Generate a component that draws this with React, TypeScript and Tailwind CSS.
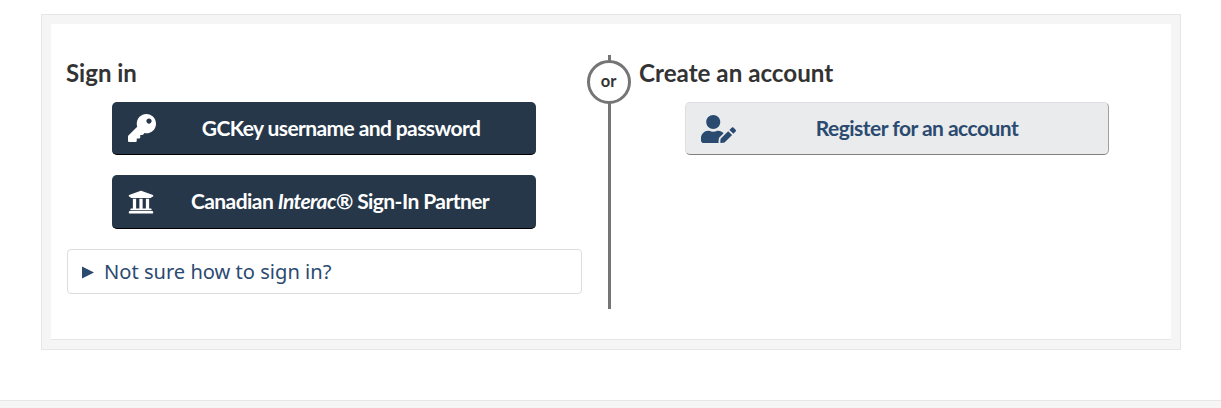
import { FaKey, FaUniversity, FaUserEdit } from 'react-icons/fa'

const lato = "font-['Lato','Liberation_Sans',sans-serif]"

export default function App() {
  return (
    <div className="h-[408px] overflow-hidden bg-white font-['Noto_Sans',sans-serif]">
      <div className="ml-[41px] mr-[40px] mt-[14px] border border-[#e6e6e6] bg-[#f5f5f5] p-[9px]">
        <div className="flex h-[316px] border-b border-[#e6e6e6] bg-white pl-[15px] pt-[31px]">
          {/* Sign in */}
          <div className="w-[516px] shrink-0">
            <h2 className={`${lato} mt-[2px] h-[32px] text-[24px] font-bold leading-[32px] text-[#333333]`}>Sign in</h2>
            <div className="ml-[46px] mt-[13px] flex w-[424px] flex-col gap-[20px]">
              <button className={`${lato} flex h-[53px] items-center rounded-[5px] border-b border-black bg-[#26374a] pl-[16px] text-[21px] font-bold text-white`}>
                <FaKey className="h-[28px] w-[28px] shrink-0" />
                <span className="flex-1 pr-[10px] text-center tracking-[-0.6px]">GCKey username and password</span>
              </button>
              <button className={`${lato} flex h-[54px] items-center rounded-[5px] border-b border-black bg-[#26374a] pl-[16px] text-[21px] font-bold text-white`}>
                <FaUniversity className="h-[26px] w-[26px] shrink-0" />
                <span className="flex-1 pb-[2px] pr-[10px] text-center tracking-[-0.57px]">
                  Canadian <i>Interac</i>® Sign-In Partner
                </span>
              </button>
            </div>
            <div className="ml-px mt-[20px] flex h-[45px] w-[515px] items-center rounded-[4px] border border-[#dddddd] pl-[14px] pt-[2px] text-[20.1px] text-[#2b4a70]">
              <svg width="12" height="13" viewBox="0 0 12 13" className="shrink-0">
                <path d="M0 0.5 L12 6.5 L0 12.5 Z" fill="#2b4a70" />
              </svg>
              <span className="ml-[10px]">Not sure how to sign in?</span>
            </div>
          </div>
          {/* Divider */}
          <div className="relative ml-[26px] mr-[28px] h-[254px] w-[3px] shrink-0 bg-[#757575]">
            <div className={`${lato} absolute left-[-21px] top-[5px] flex h-[44px] w-[44px] items-center justify-center rounded-full border-[3.5px] border-[#757575] bg-white pb-[2px] pr-px text-[16.5px] font-bold text-[#333333]`}>
              or
            </div>
          </div>
          {/* Create an account */}
          <div className="flex-1">
            <h2 className={`${lato} mt-[2px] h-[32px] text-[24.2px] font-bold leading-[32px] text-[#333333]`}>Create an account</h2>
            <div className="ml-[46px] mt-[13px] w-[424px]">
              <button className={`${lato} flex h-[53px] w-full items-center rounded-[5px] border border-[#dcdee1] border-b-[#808080] border-r-[#a0a0a0] bg-[#e9ebed] pl-[15px] text-[21px] font-bold text-[#2b4a70]`}>
                <FaUserEdit className="h-[28px] w-[35px] shrink-0" />
                <span className="flex-1 pb-[2px] pr-[10px] text-center tracking-[-0.52px]">Register for an account</span>
              </button>
            </div>
          </div>
        </div>
      </div>
      <div className="mt-[50px] h-[8px] border-t border-[#e6e6e6] bg-[#f5f5f5]" />
    </div>
  )
}
